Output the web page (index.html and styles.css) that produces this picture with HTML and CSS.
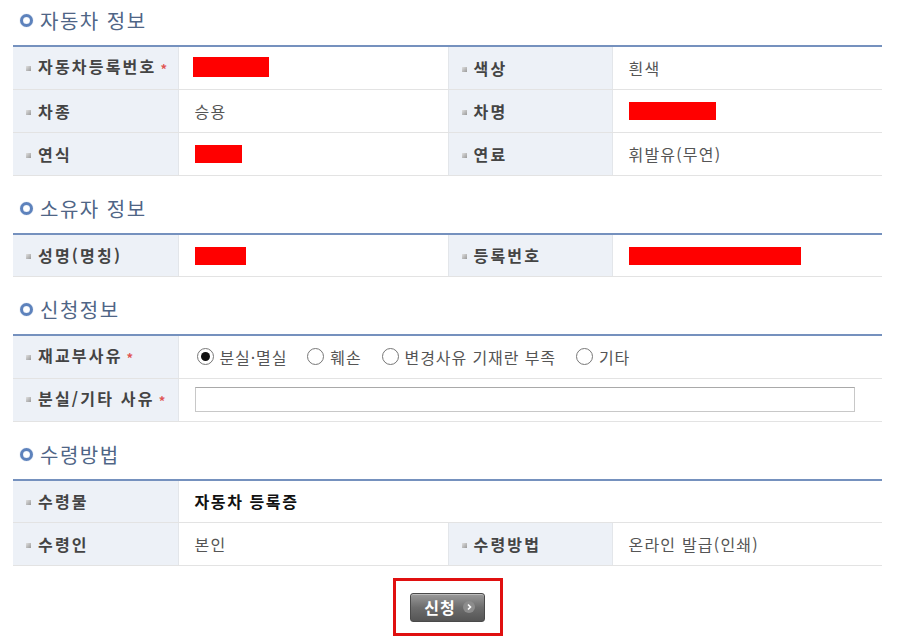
FILE: index.html
```html
<!DOCTYPE html>
<html lang="ko">
<head>
<meta charset="utf-8">
<title>자동차 등록증 재교부 신청</title>
<link rel="stylesheet" href="styles.css">
</head>
<body>
<div class="page">
  <section class="section">
    <h2 class="sec-title"><span class="ring"></span>자동차 정보</h2>
    <table class="info">
      <colgroup><col class="c-lab"><col class="c-val"><col class="c-lab2"><col class="c-val"></colgroup>
      <tr>
        <th><span class="dot"></span>자동차등록번호<span class="req">*</span></th>
        <td><span class="mask m-first" style="width:76px"></span></td>
        <th><span class="dot"></span>색상</th>
        <td>흰색</td>
      </tr>
      <tr>
        <th><span class="dot"></span>차종</th>
        <td>승용</td>
        <th><span class="dot"></span>차명</th>
        <td><span class="mask" style="width:87px"></span></td>
      </tr>
      <tr>
        <th><span class="dot"></span>연식</th>
        <td><span class="mask" style="width:47px"></span></td>
        <th><span class="dot"></span>연료</th>
        <td>휘발유(무연)</td>
      </tr>
    </table>
  </section>

  <section class="section">
    <h2 class="sec-title"><span class="ring"></span>소유자 정보</h2>
    <table class="info">
      <colgroup><col class="c-lab"><col class="c-val"><col class="c-lab2"><col class="c-val"></colgroup>
      <tr>
        <th><span class="dot"></span>성명(명칭)</th>
        <td><span class="mask" style="width:51px"></span></td>
        <th><span class="dot"></span>등록번호</th>
        <td><span class="mask" style="width:172px"></span></td>
      </tr>
    </table>
  </section>

  <section class="section">
    <h2 class="sec-title"><span class="ring"></span>신청정보</h2>
    <table class="info">
      <colgroup><col class="c-lab"><col class="c-val"><col class="c-lab2"><col class="c-val"></colgroup>
      <tr>
        <th><span class="dot"></span>재교부사유<span class="req">*</span></th>
        <td colspan="3">
          <div class="radios">
            <label class="radio"><span class="rb on"></span>분실·멸실</label>
            <label class="radio"><span class="rb"></span>훼손</label>
            <label class="radio"><span class="rb"></span>변경사유 기재란 부족</label>
            <label class="radio"><span class="rb"></span>기타</label>
          </div>
        </td>
      </tr>
      <tr>
        <th><span class="dot"></span>분실/기타 사유<span class="req">*</span></th>
        <td colspan="3"><input class="txt" type="text"></td>
      </tr>
    </table>
  </section>

  <section class="section">
    <h2 class="sec-title"><span class="ring"></span>수령방법</h2>
    <table class="info">
      <colgroup><col class="c-lab"><col class="c-val"><col class="c-lab2"><col class="c-val"></colgroup>
      <tr>
        <th><span class="dot"></span>수령물</th>
        <td colspan="3" class="strong">자동차 등록증</td>
      </tr>
      <tr>
        <th><span class="dot"></span>수령인</th>
        <td>본인</td>
        <th><span class="dot"></span>수령방법</th>
        <td>온라인 발급(인쇄)</td>
      </tr>
    </table>
  </section>

  <div class="actions">
    <div class="highlight">
      <button class="btn" type="button">신청<svg class="arr" viewBox="0 0 12 12" width="12" height="12" aria-hidden="true"><circle cx="6" cy="6" r="6" fill="#8c8c8c"/><path d="M5 3.5 L7.5 6 L5 8.5" fill="none" stroke="#fff" stroke-width="1.6"/></svg></button>
    </div>
  </div>
</div>
</body>
</html>
```

FILE: styles.css
```css
* { box-sizing: border-box; }
html, body { margin: 0; padding: 0; background: #fff; }
body {
  font-family: "Noto Sans CJK KR", "Noto Sans", sans-serif;
  color: #555;
  font-size: 16px;
}
.page {
  width: 869px;
  margin-left: 13px;
}
.section + .section { margin-top: 12px; }
.sec-title {
  margin: 0;
  height: 45px;
  padding-bottom: 4px;
  display: flex;
  align-items: center;
  font-size: 20px;
  font-weight: 400;
  color: #4f6586;
  letter-spacing: 1.5px;
}
.ring {
  width: 13px;
  height: 13px;
  border-radius: 50%;
  border: 3px solid #5d82bc;
  box-shadow: inset 0 0 1px #9fb6d9, 0 0 1px #8aa4cf;
  margin: 0 7px 0 7px;
  flex: none;
}
.info {
  width: 869px;
  border-collapse: collapse;
  table-layout: fixed;
  border-top: 2px solid #7591be;
  letter-spacing: 1.2px;
}
.c-lab { width: 165px; }
.c-val { width: 270px; }
.c-lab2 { width: 164px; }
.info th, .info td {
  height: 43px;
  border-bottom: 1px solid #e3e3e3;
  border-right: 1px solid #e3e6ea;
  padding: 0;
  vertical-align: middle;
  line-height: 20px;
}
.info th:last-child, .info td:last-child { border-right: 0; }
.info th {
  background: #edf1f7;
  text-align: left;
  font-weight: 700;
  color: #444;
  padding-left: 13px;
  white-space: nowrap;
  letter-spacing: 2.2px;
}
.info td {
  background: #fff;
  padding-left: 16px;
  color: #555;
}
.info td.strong { font-weight: 700; color: #111; letter-spacing: 1.6px; }
.dot {
  display: inline-block;
  width: 5px;
  height: 5px;
  background: linear-gradient(135deg, #e0e0e0, #9a9a9a);
  margin-right: 7px;
  vertical-align: middle;
  position: relative;
  top: -1px;
}
.req {
  color: #e05555;
  font-size: 13px;
  margin-left: 4px;
  vertical-align: middle;
  letter-spacing: 0;
}
.mask {
  display: inline-block;
  height: 18px;
  background: #ff0000;
  vertical-align: middle;
  position: relative;
  top: -1px;
}
.mask.m-first { height: 20px; top: -2px; margin-left: -2px; }
.radios { display: flex; align-items: center; gap: 20px; padding-left: 2px; letter-spacing: 0.9px; }
.radio { display: flex; align-items: center; gap: 6px; white-space: nowrap; }
.rb {
  width: 17px;
  height: 17px;
  border-radius: 50%;
  border: 1px solid #777;
  background: #fff;
  display: inline-flex;
  align-items: center;
  justify-content: center;
}
.rb.on::after {
  content: "";
  width: 9px;
  height: 9px;
  border-radius: 50%;
  background: #111;
}
.txt {
  display: block;
  width: 660px;
  height: 25px;
  border: 1px solid #c8c8c8;
  border-top-color: #a9a9a9;
  background: #fff;
  margin: 0;
  padding: 0 4px;
}
.actions {
  display: flex;
  justify-content: center;
  margin-top: 12px;
}
.highlight {
  border: 3px solid #e01010;
  width: 110px;
  height: 58px;
  display: flex;
  align-items: center;
  justify-content: center;
}
.btn {
  width: 75px;
  height: 29px;
  border: 1px solid #4a4a4a;
  border-radius: 3px;
  background: linear-gradient(#9a9a9a, #6d6d6d 50%, #555 100%);
  box-shadow: inset 0 1px 0 rgba(255,255,255,0.35);
  color: #fff;
  font-family: "Noto Sans CJK KR", sans-serif;
  font-size: 16px;
  font-weight: 700;
  display: flex;
  align-items: center;
  justify-content: center;
  gap: 7px;
  padding: 0 0 0 4px;
  letter-spacing: 1px;
}
.arr {
  flex: none;
  display: block;
}
```
